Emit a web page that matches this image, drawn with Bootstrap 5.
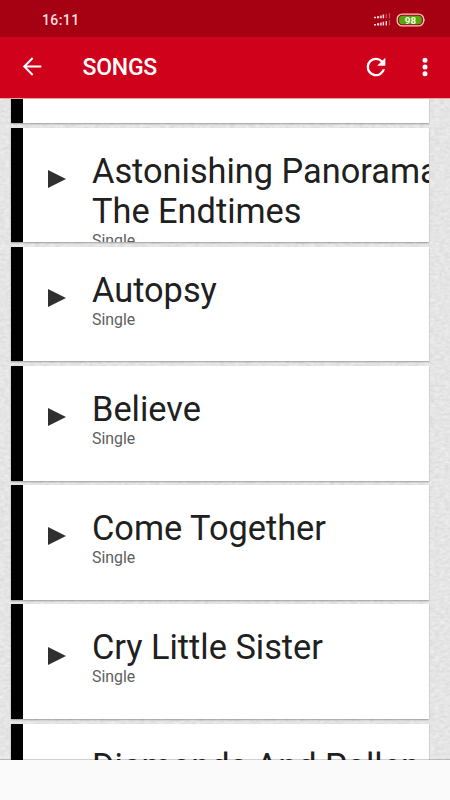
<!DOCTYPE html>
<html lang="en">
<head>
<meta charset="utf-8">
<meta name="viewport" content="width=device-width, initial-scale=1">
<title>Songs</title>
<link href="https://cdn.jsdelivr.net/npm/bootstrap@5.3.0/dist/css/bootstrap.min.css" rel="stylesheet">
<style>
body{font-family:Roboto,"Liberation Sans",sans-serif;height:800px;background:#fafafa}
.status{height:37px;background:#a60013;padding:3px 24px 0 42px;color:#ffdfe0}
.clock{font-size:14px;font-weight:500;letter-spacing:.4px}
.appbar{height:62px;background:#d0011b;padding:0 18px 2px 21px;border-bottom:1px solid #f0a0a6}
.screen-title{font-size:23px;font-weight:500;letter-spacing:-.25px;margin-left:38.6px;padding-top:3px}
.songs{height:661px;background-color:#e2e2e2;padding-left:11px;padding-right:21px}
.songs::after{content:"";position:absolute;inset:auto 0 0;height:1px;background:rgba(0,0,0,.18);z-index:2}
.paper{inset:0;z-index:0}
.song-list{margin-top:-90.3px;gap:4.75px;z-index:1}
.song{height:114.4px;border-left:12px solid #000;box-shadow:0 1px 1.5px rgba(0,0,0,.32);padding:22.7px 0 0 25px;flex:none}
.play{width:18px;margin-right:26px;margin-top:18.5px;flex:none}
.song-name{font-size:34.35px;line-height:40.7px;color:#202020;font-weight:400}
.song-kind{font-size:15.9px;line-height:18px;color:#606060;margin-top:.5px}
</style>
</head>
<body class="d-flex flex-column overflow-hidden">
<header class="text-white flex-shrink-0">
  <div class="status d-flex align-items-center justify-content-between">
    <span class="clock">16:11</span>
    <span class="d-flex align-items-center">
      <svg width="18" height="14" viewBox="0 0 18 14" fill="#ffdce0">
        <path d="M1 3.8h2v1.4H1zM4 3.2h2.2v2H4zM7.2 2.4h1.5v2.8H7.2zM9.6 1.6h1.5v3.6H9.6z"/>
        <path opacity=".35" d="M12.6.8H14v4.4h-1.4zM15.8 0h1.3v5.2h-1.3z"/>
        <path d="M1 11h2v1.4H1zM4 10.3h2.2v2.1H4zM7.2 9.5h1.5v2.9H7.2zM9.6 8.7h1.5v3.7H9.6zM12.6 8H14v4.4h-1.4z"/>
        <path opacity=".35" d="M15.8 7.2h1.3v5.2h-1.3z"/>
      </svg>
      <svg style="margin-left:5px" width="30" height="14" viewBox="0 0 30 14">
        <rect x="1.2" y="1.1" width="26.4" height="11.8" rx="5" fill="#a60013" stroke="#ffc4c3" stroke-width="1.3"/>
        <rect x="3" y="2.7" width="22.8" height="8.6" rx="3.5" fill="#55a70b"/>
        <path d="M28.2 5q1.2 2 0 4z" fill="#ffc4c3"/>
        <text x="14.4" y="10.5" text-anchor="middle" font-family="Roboto,sans-serif" font-size="9.8" font-weight="700" fill="#f4ffe7">98</text>
      </svg>
    </span>
  </div>
  <nav class="appbar d-flex align-items-center">
    <svg width="23" height="23" viewBox="0 0 24 24" fill="none" stroke="#fff" stroke-width="2.1"><path d="M21.2 12H3.6M12.2 3.2L3.4 12l8.8 8.8"/></svg>
    <span class="screen-title">SONGS</span>
    <svg class="ms-auto" width="28" height="28" viewBox="0 0 24 24" fill="#fff"><path d="M17.65 6.35A7.96 7.96 0 0 0 12 4a8 8 0 1 0 7.73 10h-2.08A6 6 0 1 1 12 6c1.66 0 3.14.69 4.22 1.78L13 11h7V4z"/></svg>
    <svg width="14" height="22" viewBox="0 0 14 22" fill="#fff" style="margin-left:28px"><circle cx="7" cy="4.2" r="2.5"/><circle cx="7" cy="11" r="2.5"/><circle cx="7" cy="17.8" r="2.5"/></svg>
  </nav>
</header>
<main class="songs position-relative overflow-hidden flex-shrink-0">
  <svg class="paper position-absolute w-100 h-100" aria-hidden="true">
    <filter id="grain" x="0" y="0" width="100%" height="100%" color-interpolation-filters="sRGB"><feTurbulence type="fractalNoise" baseFrequency=".2 .35" numOctaves="3" seed="4"/><feColorMatrix values=".11 0 0 0 .842  .11 0 0 0 .842  .11 0 0 0 .842  0 0 0 0 1"/></filter>
    <rect width="100%" height="100%" filter="url(#grain)"/>
  </svg>
  <div class="song-list d-flex flex-column position-relative">
    <article class="song bg-white"></article>
    <article class="song bg-white d-flex overflow-hidden">
      <svg class="play" height="20" viewBox="0 0 18 20"><path d="M0 1v18l18-9z" fill="#303030"/></svg>
      <div class="text-nowrap"><h2 class="song-name mb-0">Astonishing Panorama Of<br>The Endtimes</h2><p class="song-kind mb-0">Single</p></div>
    </article>
    <article class="song bg-white d-flex overflow-hidden">
      <svg class="play" height="20" viewBox="0 0 18 20"><path d="M0 1v18l18-9z" fill="#303030"/></svg>
      <div class="text-nowrap"><h2 class="song-name mb-0">Autopsy</h2><p class="song-kind mb-0">Single</p></div>
    </article>
    <article class="song bg-white d-flex overflow-hidden">
      <svg class="play" height="20" viewBox="0 0 18 20"><path d="M0 1v18l18-9z" fill="#303030"/></svg>
      <div class="text-nowrap"><h2 class="song-name mb-0">Believe</h2><p class="song-kind mb-0">Single</p></div>
    </article>
    <article class="song bg-white d-flex overflow-hidden">
      <svg class="play" height="20" viewBox="0 0 18 20"><path d="M0 1v18l18-9z" fill="#303030"/></svg>
      <div class="text-nowrap"><h2 class="song-name mb-0">Come Together</h2><p class="song-kind mb-0">Single</p></div>
    </article>
    <article class="song bg-white d-flex overflow-hidden">
      <svg class="play" height="20" viewBox="0 0 18 20"><path d="M0 1v18l18-9z" fill="#303030"/></svg>
      <div class="text-nowrap"><h2 class="song-name mb-0">Cry Little Sister</h2><p class="song-kind mb-0">Single</p></div>
    </article>
    <article class="song bg-white d-flex overflow-hidden">
      <svg class="play" height="20" viewBox="0 0 18 20"><path d="M0 1v18l18-9z" fill="#303030"/></svg>
      <div class="text-nowrap"><h2 class="song-name mb-0">Diamonds And Pollen</h2><p class="song-kind mb-0">Single</p></div>
    </article>
  </div>
</main>
<script src="https://cdn.jsdelivr.net/npm/bootstrap@5.3.0/dist/js/bootstrap.bundle.min.js"></script>
</body>
</html>
